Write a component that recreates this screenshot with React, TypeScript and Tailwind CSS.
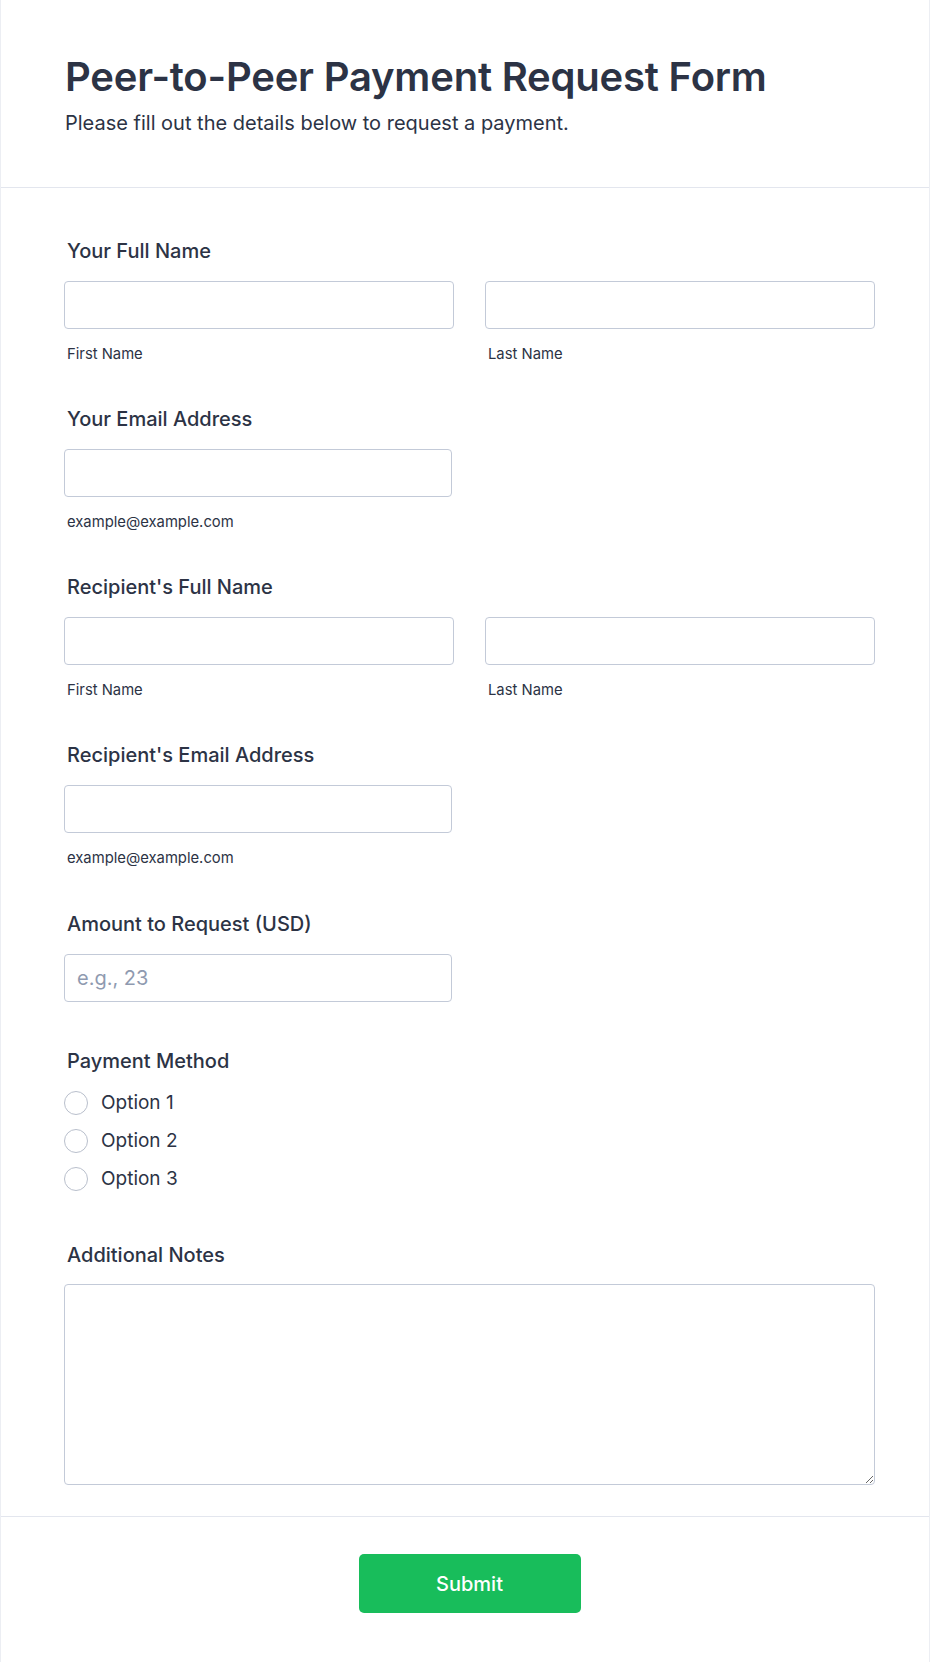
import React from "react"

const labelCls = "block pl-[3px] text-[20px] leading-[30px] font-medium text-[#2c3345]"
const inputCls =
  "block h-[48px] rounded-[4px] border border-[#c3cad8] bg-white px-[12px] text-[20px] text-[#2c3345] placeholder:text-[#8f9ab0] outline-none"
const subCls = "mt-[14px] pl-[3px] text-[14.8px] leading-[22px] text-[#2c3345]"

function NameField({ label }: { label: string }) {
  return (
    <div>
      <label className={labelCls}>{label}</label>
      <div className="mt-[15px] grid grid-cols-2 gap-x-[31px]">
        <div>
          <input className={`${inputCls} w-full`} />
          <div className={subCls}>First Name</div>
        </div>
        <div>
          <input className={`${inputCls} w-full`} />
          <div className={subCls}>Last Name</div>
        </div>
      </div>
    </div>
  )
}

function EmailField({ label }: { label: string }) {
  return (
    <div>
      <label className={labelCls}>{label}</label>
      <input type="email" className={`${inputCls} mt-[15px] w-[388px]`} />
      <div className={subCls}>example@example.com</div>
    </div>
  )
}

export default function App() {
  const options = ["Option 1", "Option 2", "Option 3"]

  return (
    <div className="min-h-[1662px] bg-white border-x border-[#eceef3] font-['Inter',sans-serif] text-[#2c3345]">
      <header className="border-b border-[#e3e6ee] pl-[64px] pr-[54px] pt-[53px] pb-[50px]">
        <h1 className="text-[40px] leading-[48px] font-semibold tracking-[-0.2px]">
          Peer-to-Peer Payment Request Form
        </h1>
        <p className="mt-[8px] text-[20px] leading-[28px]">
          Please fill out the details below to request a payment.
        </p>
      </header>

      <form className="pl-[63px] pr-[54px] pt-[48px] pb-[31px]">
        <div className="flex flex-col">
          <NameField label="Your Full Name" />
          <div className="mt-[39px]">
            <EmailField label="Your Email Address" />
          </div>
          <div className="mt-[39px]">
            <NameField label="Recipient's Full Name" />
          </div>
          <div className="mt-[39px]">
            <EmailField label="Recipient's Email Address" />
          </div>

          <div className="mt-[40px]">
            <label className={labelCls}>Amount to Request (USD)</label>
            <input
              type="number"
              placeholder="e.g., 23"
              className={`${inputCls} mt-[15px] w-[388px]`}
            />
          </div>

          <div className="mt-[44px]">
            <div className={labelCls}>Payment Method</div>
            <div className="mt-[8px] flex flex-col">
              {options.map((opt) => (
                <label key={opt} className="flex h-[38px] items-center gap-[13px]">
                  <span className="h-[24px] w-[24px] rounded-full border border-[#b9bfcc] bg-white" />
                  <span className="text-[19px] leading-[24px] text-[#2c3345]">{opt}</span>
                </label>
              ))}
            </div>
          </div>

          <div className="mt-[42px]">
            <label className={labelCls}>Additional Notes</label>
            <textarea className="mt-[14px] block h-[201px] w-full rounded-[4px] border border-[#c3cad8] bg-white p-[12px] text-[18px] outline-none" />
          </div>
        </div>
      </form>

      <div className="flex justify-center border-t border-[#e3e6ee] pl-[63px] pr-[54px] pt-[37px] pb-[50px]">
        <button
          type="button"
          className="h-[59px] w-[222px] rounded-[5px] bg-[#18bd5b] text-[20px] font-medium text-white"
        >
          Submit
        </button>
      </div>
    </div>
  )
}
